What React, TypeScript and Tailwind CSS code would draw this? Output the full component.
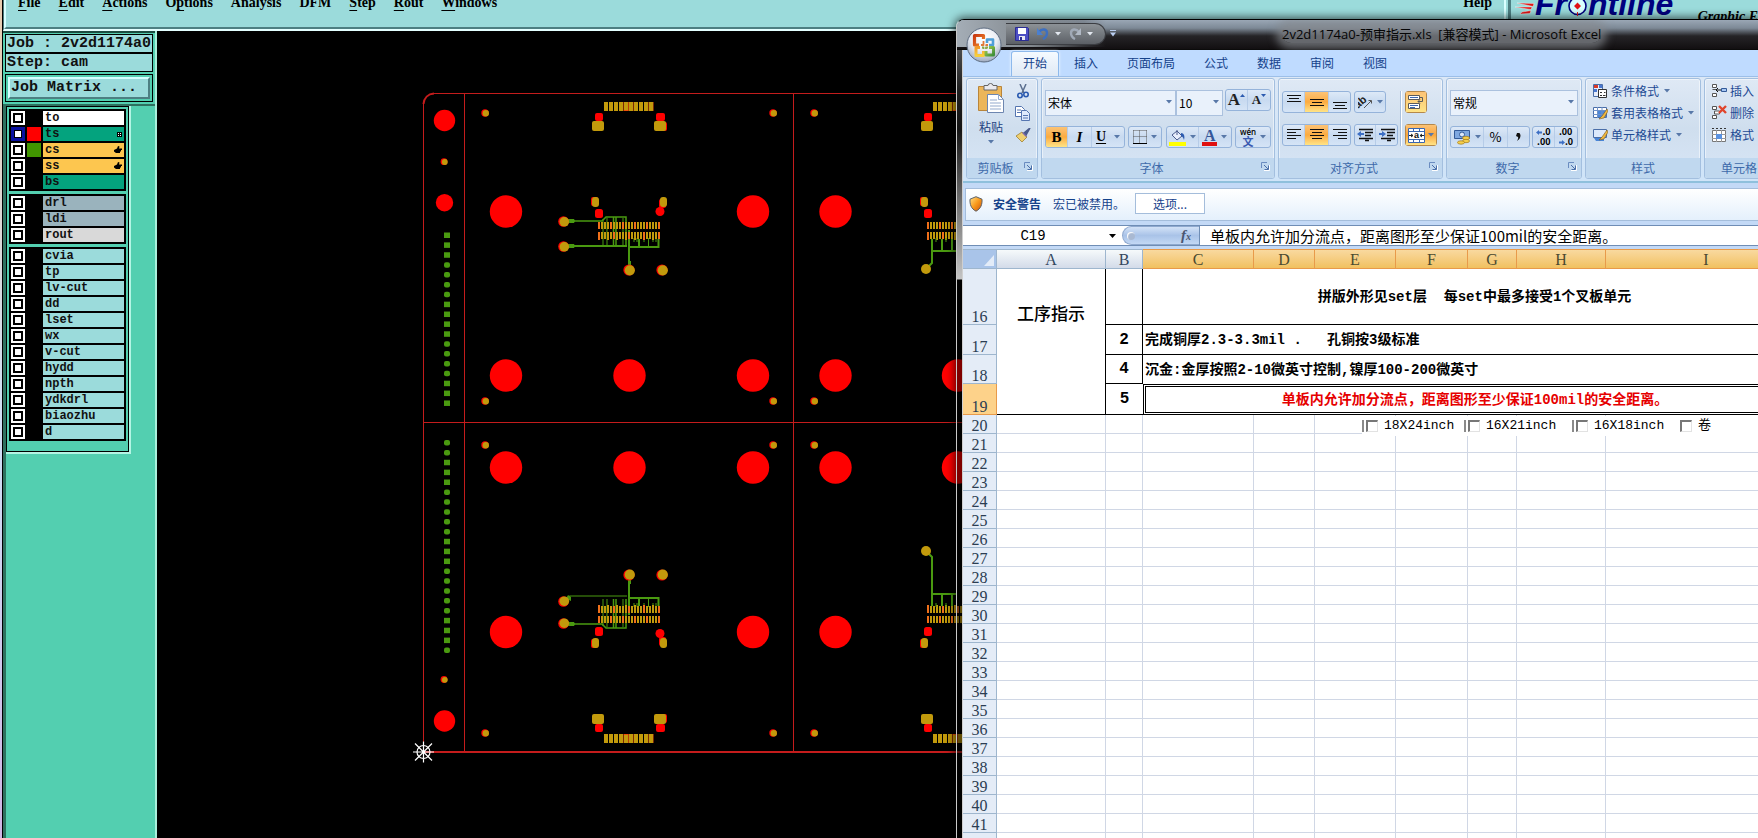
import React from "react";

type Layer = { name: string; bg: string; swatch?: string; mark?: "hand" | "grid"; active?: boolean };

const layerGroups: Layer[][] = [
  [
    { name: "to", bg: "bg-white" },
    { name: "ts", bg: "bg-[#04a37e]", swatch: "bg-[#ff0000]", mark: "grid", active: true },
    { name: "cs", bg: "bg-[#fdc64f]", swatch: "bg-[#419600]", mark: "hand" },
    { name: "ss", bg: "bg-[#fdc64f]", mark: "hand" },
    { name: "bs", bg: "bg-[#04a37e]" },
  ],
  [
    { name: "drl", bg: "bg-[#9ab3bd]" },
    { name: "ldi", bg: "bg-[#9ab3bd]" },
    { name: "rout", bg: "bg-[#d9d9d9]" },
  ],
  ["cvia", "tp", "lv-cut", "dd", "lset", "wx", "v-cut", "hydd", "npth", "ydkdrl", "biaozhu", "d"].map((name) => ({
    name,
    bg: "bg-[#9bdbdb]",
  })),
];

const menus: [string, string, string][] = [
  ["", "F", "ile"],
  ["", "E", "dit"],
  ["", "A", "ctions"],
  ["O", "p", "tions"],
  ["Analysis", "", ""],
  ["DFM", "", ""],
  ["", "S", "tep"],
  ["", "R", "out"],
  ["", "W", "indows"],
];

/* ---------- CAM application ---------- */

function MenuBar() {
  return (
    <header className="flex h-[31px] shrink-0 overflow-hidden border-b-2 border-l border-[#e4ffff] border-l-[#4a7c7c] bg-[#9bdbdb]">
      <div className="flex min-w-0 flex-1 items-start justify-between border-b-2 border-l-2 border-b-[#4d7f82] border-l-[#d9ffff] pl-3 pr-3">
        <nav className="-mt-[5px] flex gap-[18px] font-['Liberation_Serif',serif] text-sm leading-4 font-bold text-black">
          {menus.map(([a, u, b]) => (
            <button key={a + u + b} type="button" className="whitespace-nowrap">
              {a}
              {u && <span className="underline decoration-1 underline-offset-[3px]">{u}</span>}
              {b}
            </button>
          ))}
        </nav>
        <button type="button" className="-mt-[5px] font-['Liberation_Serif',serif] text-sm leading-4 font-bold">
          Help
        </button>
      </div>
      <div className="flex w-[254px] shrink-0 items-start border-l-2 border-[#d9ffff] pl-0.5">
        <div className="flex h-full w-full items-start border-l-[3px] border-[#4d7f82] pl-1">
          <svg width="20" height="16" viewBox="0 0 20 16" className="shrink-0">
            <path d="M2 3L19 3.500L18 6.500zM0 7L17 7L16 9.500zM7 12L16 10.500L15 13.500L5 14z" fill="#e01414" stroke="#fff" strokeWidth=".4" />
          </svg>
          <div className="-mt-3 flex items-start font-['Liberation_Sans',sans-serif] text-[32px] leading-8 font-bold text-[#00007f] italic">
            <span>Fr</span>
            <svg width="21" height="20" viewBox="0 0 21 20" className="mt-2 shrink-0">
              <circle cx="10.500" cy="10" r="8.500" fill="#d8ffff" stroke="#00007f" strokeWidth="1.600" />
              <path d="M10.500 6.500l3.500 3.500-3.500 3.500-3.500-3.500zM10 0h1v4h-1zM10 16h1v4h-1z" fill="#e01414" />
            </svg>
            <span>ntline</span>
          </div>
          <span className="mt-[9px] ml-auto font-['Liberation_Serif',serif] text-sm leading-4 font-bold whitespace-nowrap italic">
            Graphic E
          </span>
        </div>
      </div>
    </header>
  );
}

function HandIcon() {
  return (
    <svg width="8" height="8" viewBox="0 0 8 8" fill="#000">
      <path d="M0 4L3 2.500L4 0L5.500 .5L5 2.500H8V4H7V5H6.500V6H6V7H2L0 5.500z" />
    </svg>
  );
}

function GridIcon() {
  return (
    <svg width="5" height="5" viewBox="0 0 5 5">
      <path d="M0 0h5v5H0z" fill="#000" />
      <path d="M1 1h1v1H1zM3 1h1v1H3zM1 3h1v1H1zM3 3h1v1H3z" fill="#fff" />
    </svg>
  );
}

function Sidebar() {
  return (
    <aside className="flex w-[154px] shrink-0 flex-col border-r-2 border-[#a8f0dc] bg-[#53cfb0] font-['Liberation_Mono',monospace] font-bold text-[#111]">
      <div className="flex flex-col border-t-2 border-[#1c4c41] p-0.5 pt-px text-[15px] leading-[17px]">
        <div className="border border-black bg-[#9bdbdb] px-px whitespace-nowrap">Job : 2v2d1174a0</div>
        <div className="border border-black bg-[#9bdbdb] px-px">Step: cam</div>
        <div className="mt-0.5 border border-black p-0.5">
          <button
            type="button"
            className="block w-full border-2 border-t-[#d5ffff] border-r-[#4d7f82] border-b-[#4d7f82] border-l-[#d5ffff] bg-[#9bdbdb] px-px text-left leading-[18px]"
          >
            Job Matrix ...
          </button>
        </div>
      </div>
      <div className="flex flex-1 border-t-2 border-l-[3px] border-[#2e705f]">
        <div className="w-[125px] self-start border-r-2 border-b-2 border-[#b4f5e4]">
          <div className="flex flex-col gap-[3px] border border-black p-0.5 pb-2.5">
            {layerGroups.map((group, i) => (
              <ul key={i} className="flex flex-col gap-0.5 bg-black p-0.5 text-xs leading-[14px]">
                {group.map((l) => (
                  <li key={l.name} className="flex h-3.5 gap-0.5">
                    <button
                      type="button"
                      aria-label={`Toggle ${l.name}`}
                      className={
                        l.active
                          ? "size-3.5 border-[3px] border-[#0a12a0] bg-black p-px"
                          : "size-3.5 border-2 border-white bg-black p-0.5"
                      }
                    >
                      <span className="block size-full bg-white" />
                    </button>
                    <span className={`size-3.5 ${l.swatch ?? "bg-black"}`} />
                    <span className={`flex flex-1 items-center justify-between px-0.5 ${l.bg}`}>
                      {l.name}
                      {l.mark === "hand" && <HandIcon />}
                      {l.mark === "grid" && <GridIcon />}
                    </span>
                  </li>
                ))}
              </ul>
            ))}
          </div>
        </div>
      </div>
    </aside>
  );
}

const GOLD = "#c29a0c";
const RED = "#ff0000";
const GREEN = "#4a9a10";
const LINE = "#c41c1c";

function range(n: number) {
  return Array.from({ length: n }, (_, i) => i);
}

function Pad({ x, y, r }: { x: number; y: number; r: number }) {
  return (
    <g>
      <circle cx={x - 0.5} cy={y} r={r} fill={RED} />
      <circle cx={x + 0.3} cy={y + 0.3} r={r - 0.5} fill={GOLD} />
    </g>
  );
}

function Connector() {
  return (
    <g>
      {range(10).map((i) => (
        <g key={i}>
          {(i === 4 || i === 5 || i === 9) && <rect x={603.500 + i * 5} y={102} width={5} height={9} fill="#f0500a" />}
          <rect x={604 + i * 5} y={102} width={4} height={i === 4 ? 8 : 9} fill={GOLD} />
        </g>
      ))}
      <rect x={595} y={113} width={8} height={8} rx={2} fill={RED} />
      <rect x={656} y={113} width={9} height={8} rx={2} fill={RED} />
      <rect x={656} y={122} width={11} height={9} rx={2} fill={RED} />
      <rect x={592} y={121} width={12} height={10} rx={2} fill={GOLD} />
      <rect x={654} y={121} width={12} height={10} rx={2} fill={GOLD} />
      <rect x={591} y={197} width={7} height={9} rx={2} fill={RED} />
      <rect x={592} y={197} width={7} height={10} rx={3} fill={GOLD} />
      <rect x={659} y={199} width={7} height={9} rx={2} fill={RED} />
      <rect x={660} y={197} width={7} height={10} rx={3} fill={GOLD} />
      <rect x={595} y={209} width={8} height={9} rx={2.500} fill={RED} />
      <circle cx={660} cy={211.500} r={4.500} fill={RED} />
      {range(21).map((i) => (
        <g key={i}>
          <rect x={598 + i * 3} y={222} width={2} height={7} fill={i % 4 === 0 ? "#f0701a" : GOLD} />
          <rect x={598 + i * 3} y={232} width={2} height={i % 3 === 0 ? 8 : 7} fill={i % 5 === 0 ? "#f0701a" : GOLD} />
        </g>
      ))}
    </g>
  );
}

function LeftTraces({ mirrored = false }: { mirrored?: boolean }) {
  const padY = mirrored ? 243.500 : 246.500;
  return (
    <g>
      <g stroke={GREEN} fill="none" strokeWidth={1.500}>
        <path d="M568 221H602L606 217H626V246" />
        <path d={mirrored ? "M566 247L570 249H627" : "M568 246H627"} strokeWidth={mirrored ? 1.200 : 2} />
        <path d="M603 219V246M607 218V246M623 218V246" strokeWidth={1} />
        <path d="M613.500 217V246M616 217V246" strokeWidth={1.500} />
        <path d="M629 230V265M629 247H658.500V239" strokeWidth={2} />
        <path d="M639 239V247" strokeWidth={2} />
        <path d="M634 238V242M637 238V242M644 238V242M648.500 238V246M653 238V242M656 238V242" strokeWidth={1} />
      </g>
      <path d="M568 219h6l1 2-1 2h-6zM628 266l1-5h2v5z" fill={GREEN} />
      <path d={mirrored ? "M566 246l5-2 0 4-3 2z" : "M568 244h6l1 2-1 2h-6z"} fill={GREEN} />
      <Pad x={564} y={221.500} r={5.300} />
      <Pad x={564} y={padY} r={5.300} />
      <Pad x={629.500} y={270} r={5.600} />
      <Pad x={662.500} y={270} r={5.600} />
    </g>
  );
}

function RightTraces({ reach }: { reach: number }) {
  return (
    <g>
      <g stroke={GREEN} fill="none" strokeWidth={2}>
        <path d={`M932 239V${reach - 6}L927 ${reach - 1}M932 251H956M942 239V251M952 239V251`} />
        <path d="M936 238V242M946 238V242" strokeWidth={1} />
      </g>
      <circle cx={926} cy={reach} r={5} fill={GOLD} />
    </g>
  );
}

function BoardCanvas() {
  const big: [number, number][] = [
    [506, 211.500], [753, 211.500], [835.500, 211.500],
    [506, 375.500], [629.500, 375.500], [753, 375.500], [835.500, 375.500], [958, 375.500],
    [506, 467.500], [629.500, 467.500], [753, 467.500], [835.500, 467.500], [958, 467.500],
    [506, 632], [753, 632], [835.500, 632],
  ];
  return (
    <svg width="806" height="807" viewBox="157 31 806 807" className="shrink-0" aria-label="Panel view">
      <g stroke={LINE} fill="none">
        <path d="M423.500 751V104M434 93.500H963M464.500 93.500V751M793.500 93.500V751M423.500 422.500H963" />
        <path d="M423.500 752H963" strokeWidth={2} />
        <path d="M423.500 104C424 98 428 94 434 93.500" strokeWidth={2} />
      </g>
      {big.map(([x, y]) => (
        <circle key={`${x}-${y}`} cx={x} cy={y} r={16.200} fill={RED} />
      ))}
      <circle cx={444.500} cy={120.500} r={10.700} fill={RED} />
      <circle cx={444.500} cy={202.700} r={8.700} fill={RED} />
      <circle cx={444.500} cy={721} r={10.700} fill={RED} />
      <Pad x={444.500} y={161.700} r={3.400} />
      <Pad x={444.500} y={679.500} r={3.400} />
      {[485.500, 773.500, 814.500].map((x) =>
        [113, 401, 445, 733].map((y) => <Pad key={`${x}-${y}`} x={x} y={y} r={3.700} />)
      )}
      {range(18).map((i) => (
        <rect key={i} x={444} y={232.500 + i * 9.880} width={6} height={5.500} rx={i % 8 < 3 || i % 8 === 7 ? 0 : 2} fill={GREEN} />
      ))}
      {range(22).map((i) => (
        <rect key={i} x={444} y={440 + i * 9.880} width={6} height={5.500} rx={i % 8 > 1 && i % 8 < 5 ? 0 : 2} fill={GREEN} />
      ))}
      <LeftTraces />
      <Connector />
      <g transform="translate(329 0)">
        <Connector />
      </g>
      <RightTraces reach={269} />
      <g transform="translate(0 845) scale(1 -1)">
        <LeftTraces mirrored />
        <Connector />
        <g transform="translate(329 0)">
          <Connector />
        </g>
        <RightTraces reach={294} />
      </g>
      <g stroke="#fff" strokeWidth={1.200} fill="none">
        <circle cx={423.500} cy={752} r={6.500} />
        <path d="M413 752H434M423.500 741.500V762.500M415 743.500L432 760.500M415 760.500L432 743.500" />
      </g>
    </svg>
  );
}

/* ---------- Spreadsheet window ---------- */

function Caret({ light = false }: { light?: boolean }) {
  return (
    <svg width="6" height="4" viewBox="0 0 6 4" className="shrink-0">
      <path d="M0 0h6L3 3.500z" fill={light ? "#e3e8f0" : "#5878a8"} />
    </svg>
  );
}

function OfficeButton() {
  return (
    <button type="button" aria-label="Office" className="absolute top-2 left-[10px] z-10">
      <svg width="36" height="36" viewBox="0 0 36 36">
        <defs>
          <radialGradient id="orb" cx=".5" cy=".3" r=".7">
            <stop offset="0" stopColor="#fff" />
            <stop offset=".55" stopColor="#eaedf4" />
            <stop offset="1" stopColor="#9fabc0" />
          </radialGradient>
          <linearGradient id="warm" x1="0" y1="0" x2="0" y2="1">
            <stop offset="0" stopColor="#f29a2a" />
            <stop offset="1" stopColor="#f8cf3c" />
          </linearGradient>
          <linearGradient id="hot" x1="0" y1="0" x2="1" y2="1">
            <stop offset="0" stopColor="#c93a12" />
            <stop offset="1" stopColor="#f08a2c" />
          </linearGradient>
          <linearGradient id="leaf" x1="0" y1="0" x2="1" y2="1">
            <stop offset="0" stopColor="#a6cc4a" />
            <stop offset="1" stopColor="#3e8f3a" />
          </linearGradient>
        </defs>
        <circle cx="18" cy="18" r="17" fill="url(#orb)" stroke="#5c6b80" />
        <g fill="none" strokeLinejoin="round">
          <path d="M17.500 12V8.500H8.500v9.500H13" stroke="url(#hot)" strokeWidth="3.200" />
          <path d="M21 16v-3.500h6V18h-4" stroke="#4f9fd8" strokeWidth="2.600" />
          <path d="M14 20.500H10v8h7.500V24" stroke="url(#warm)" strokeWidth="3" />
          <path d="M23 20.500h4.500v7.500H20V24" stroke="url(#leaf)" strokeWidth="3" />
          <path d="M17.500 14v4H15M20 17.500V18h2" stroke="#e07a38" strokeWidth="1.800" />
          <path d="M17.500 22v-1.500H16M20 22v-1.500h2" stroke="#8aa84a" strokeWidth="1.800" />
        </g>
      </svg>
    </button>
  );
}

function TitleBar() {
  return (
    <div className="flex h-[30px] shrink-0 items-center border-b border-[#0b0b0b] bg-[linear-gradient(to_bottom,#9aa7b5_0%,#7d8996_28%,#252427_55%,#120f11_100%)] pb-0.5">
      <div className="flex h-full w-[149px] items-center bg-[linear-gradient(to_right,#a4adb6_0%,#83898f_50%,rgba(90,94,100,0.4)_85%,transparent_100%)] pl-[49px]">
        <div className="flex h-[22px] w-[100px] shrink-0 items-center gap-1 rounded-r-full border border-l-0 border-[#3b3d42] bg-linear-to-b from-[#8d9297] to-[#5c6066] pl-[9px]">
          <button type="button" aria-label="保存">
            <svg width="14" height="14" viewBox="0 0 14 14">
              <path d="M.5 .5h12l1 1v12H.5z" fill="#4d4fc4" stroke="#2b2d92" />
              <path d="M3 1h8v6H3z" fill="#fff" />
              <path d="M4 9h6v4H4z" fill="#e8e8f2" />
              <path d="M5 10h2v3H5z" fill="#2b2d92" />
            </svg>
          </button>
          <button type="button" aria-label="撤消" className="flex items-center gap-1.5 pl-1">
            <svg width="12" height="13" viewBox="0 0 12 13" fill="none">
              <path d="M2 5C5 1 10 2 10 6c0 3-2 5-4 6" stroke="#3d6fc0" strokeWidth="2.400" />
              <path d="M0 1v7h6z" fill="#4a7fd0" />
            </svg>
            <Caret light />
          </button>
          <button type="button" aria-label="恢复" className="flex items-center gap-1.5 pl-1">
            <svg width="12" height="13" viewBox="0 0 12 13" fill="none">
              <path d="M10 5C7 1 2 2 2 6c0 3 2 5 4 6" stroke="#a0a9b6" strokeWidth="2.400" />
              <path d="M12 1v7H6z" fill="#b0b8c4" />
            </svg>
            <Caret light />
          </button>
        </div>
      </div>
      <button type="button" aria-label="自定义" className="ml-1">
        <svg width="6" height="7" viewBox="0 0 6 7">
          <path d="M0 0h6v1H0zM0 2.500h6L3 6.500z" fill="#b9cdf0" />
        </svg>
      </button>
      <h1 className="flex-1 pl-[166px] font-['Open_Sans','Noto_Sans_CJK_SC',sans-serif] text-[13px] leading-5 font-normal whitespace-pre text-[#050505]">
        <span className="rounded-full bg-[#85898e]/70 shadow-[0_0_8px_6px_rgba(133,137,142,0.7)]">
          2v2d1174a0-预审指示.xls  [兼容模式] - Microsoft Excel
        </span>
      </h1>
    </div>
  );
}

function Group({ label, width, launcher = true, children }: { label: string; width: string; launcher?: boolean; children: React.ReactNode }) {
  return (
    <section
      className={`flex h-[101px] shrink-0 flex-col overflow-hidden rounded-[3px] border border-[#a3bfdf] bg-linear-to-b from-[#dfe9f5] via-[#cfdeee] to-[#d8e6f6] shadow-[inset_0_0_0_1px_rgba(255,255,255,0.5)] ${width}`}
    >
      <div className="flex-1">{children}</div>
      <footer className="flex h-5 items-center bg-[#c0d8ef] text-xs text-[#3e6aaa]">
        <span className="flex-1 text-center whitespace-nowrap">{label}</span>
        {launcher && (
          <button type="button" aria-label={`${label}设置`} className="mr-1 pb-1">
            <svg width="9" height="9" viewBox="0 0 9 9" fill="none" stroke="#6a8cc0">
              <path d="M.5 6V.5H6" />
              <path d="M3 3l4 4M7.500 3.500v4h-4" stroke="#4a6ea8" />
              <path d="M3 8.500h5.500V3" stroke="#fff" />
            </svg>
          </button>
        )}
      </footer>
    </section>
  );
}

function Tools({ children }: { children: React.ReactNode }) {
  return (
    <div className="flex h-[22px] shrink-0 divide-x divide-[#b6cce8] overflow-hidden rounded-[3px] border border-[#95b3da] bg-linear-to-b from-[#dde9f7] via-[#c8daf0] to-[#d5e4f6]">
      {children}
    </div>
  );
}

function Tool({ label, w, on = false, caret = false, children }: { label: string; w: string; on?: boolean; caret?: boolean; children: React.ReactNode }) {
  return (
    <button
      type="button"
      aria-label={label}
      className={`flex h-full items-center justify-center gap-1 ${w} ${on ? "bg-linear-to-b from-[#fcc375] via-[#fbab3f] to-[#ffe486]" : ""}`}
    >
      {children}
      {caret && <Caret />}
    </button>
  );
}

function Combo({ label, value, width }: { label: string; value: string; width: string }) {
  return (
    <div className={`relative ${width}`}>
      <select
        aria-label={label}
        defaultValue={value}
        className="h-[26px] w-full appearance-none border border-[#abc1de] bg-[#e9f1fb] pl-0.5 text-xs text-black"
      >
        <option>{value}</option>
      </select>
      <span className="pointer-events-none absolute top-[11px] right-1">
        <Caret />
      </span>
    </div>
  );
}

function Lines({ kind }: { kind: "top" | "mid" | "bot" | "left" | "center" | "right" }) {
  const paths = {
    top: "M0 1.500h14M2 4.500h10M0 7.500h14",
    mid: "M0 5.500h14M2 8.500h10M0 11.500h14",
    bot: "M0 8.500h14M2 11.500h10M0 14.500h14",
    left: "M0 2.500h14M0 5.500h9M0 8.500h14M0 11.500h9",
    center: "M0 2.500h14M2 5.500h10M0 8.500h14M2 11.500h10",
    right: "M0 2.500h14M5 5.500h9M0 8.500h14M5 11.500h9",
  };
  return (
    <svg width="14" height="16" viewBox="0 0 14 16" stroke="#111" strokeWidth="1.200">
      <path d={paths[kind]} />
    </svg>
  );
}

function Indent({ out = false }: { out?: boolean }) {
  return (
    <svg width="16" height="14" viewBox="0 0 16 14" fill="none">
      <path d="M2 1.500h14M8 4.500h8M8 7.500h6M2 10.500h14M8 12.500h4" stroke="#111" strokeWidth="1.300" />
      <path d={out ? "M0 6l4-3v2h3v2H4v2z" : "M7 6L3 3v2H0v2h3v2z"} fill="#3d6fc4" />
    </svg>
  );
}

function StyleIcon({ kind }: { kind: "cond" | "table" | "cell" | "insert" | "delete" | "format" }) {
  return (
    <svg width="16" height="16" viewBox="0 0 16 16" fill="none">
      {kind === "cond" && (
        <>
          <path d="M1.500 1.500h9v12h-9z" fill="#e8eefa" stroke="#4a6ea8" />
          <path d="M2 2h4v3H2zM6 6h4v3H6z" fill="#d83a2a" />
          <path d="M2 6h3v3H2zM7 2h3v3H7z" fill="#4a78d0" />
          <path d="M6.500 6.500h8v8h-8z" fill="#fff" stroke="#333" />
          <path d="M8 9.500h2M12 9.500h1.500M8 12.500h2M11 12.500h2.500" stroke="#333" />
        </>
      )}
      {kind === "table" && (
        <>
          <path d="M1.500 2.500h13v10h-13z" fill="#fff" stroke="#4a6ea8" />
          <path d="M5 6h9v6H5z" fill="#4a86d8" />
          <path d="M1 5.500h13M1 9.500h13M5.500 2v11M10 2v11" stroke="#6f92c8" />
          <path d="M15 4l-5 7-3 3 5-1 4-7z" fill="#f0b840" stroke="#7a5a20" strokeWidth=".6" />
        </>
      )}
      {kind === "cell" && (
        <>
          <path d="M1.500 2.500h13v8h-13z" fill="#dce9fb" stroke="#4a6ea8" />
          <path d="M2 11h10v3H4z" fill="#4a86d8" />
          <path d="M15 3l-5 7-3 3 5-1 4-7z" fill="#f0b840" stroke="#7a5a20" strokeWidth=".6" />
        </>
      )}
      {kind === "insert" && (
        <>
          <path d="M1.500 1.500h4v3h-4zM1.500 6.500h4M1.500 10.500h4v3h-4z" fill="#fff" stroke="#555" />
          <path d="M10.500 5.500h5v3h-5z" fill="#a8c8f4" stroke="#335a98" />
          <path d="M5 7h5M5 7l2-2M5 7l2 2" stroke="#111" />
        </>
      )}
      {kind === "delete" && (
        <>
          <path d="M1.500 1.500h4v3h-4zM1.500 10.500h4v3h-4zM3.500 6h5v3h-5z" fill="#fff" stroke="#555" />
          <path d="M8 1l7 7M15 1L8 8" stroke="#e0452c" strokeWidth="2.400" />
        </>
      )}
      {kind === "format" && (
        <>
          <path d="M1.500 3.500h13v11h-13z" fill="#fff" stroke="#777" />
          <path d="M1 7.500h14M1 11.500h14M5.500 3v12M10.500 3v12" stroke="#999" />
          <path d="M5 7h6v5H5z" fill="#5a92e0" />
          <path d="M1 1.500h2M5 1.500h2M9 1.500h2M13 1.500h2" stroke="#333" />
        </>
      )}
    </svg>
  );
}

function Ribbon() {
  return (
    <div className="flex h-[107px] shrink-0 gap-[3px] overflow-hidden border-t border-b-2 border-t-[#9dbfe8] border-b-[#8fc0dc] bg-linear-to-b from-[#dce8f6] to-[#cfe4f8] pt-px pl-[3px]">
      <Group label="剪贴板" width="w-[72px]">
        <div className="flex justify-between pt-1 pr-1.5 pl-2.5">
          <button type="button" className="flex flex-col items-center text-xs text-[#1e3f80]">
            <svg width="28" height="31" viewBox="0 0 28 31" fill="none">
              <path d="M1.500 3.500h23v24h-23z" fill="#ecb65a" stroke="#b9853a" />
              <path d="M7 2.500h4a2.500 2 0 0 1 5 0h4V7H7z" fill="#e9e9ee" stroke="#666" />
              <path d="M10.500 11.500h11l5 5v13h-16z" fill="#fff" stroke="#6d86b0" />
              <path d="M21.500 11.500v5h5M13 17h7M13 20h11M13 23h11M13 26h11" stroke="#93a9cc" />
            </svg>
            <span className="mt-1 mb-1 leading-[18px]">粘贴</span>
            <Caret />
          </button>
          <div className="flex flex-col gap-[7px] pt-px">
            <button type="button" aria-label="剪切">
              <svg width="16" height="15" viewBox="0 0 16 15" fill="none">
                <path d="M5 0l4 9M11 0L7 9" stroke="#5b6f8f" strokeWidth="1.500" />
                <circle cx="5" cy="11.500" r="2.200" stroke="#2c5bb0" strokeWidth="1.600" />
                <circle cx="11" cy="10.500" r="2.200" stroke="#2c5bb0" strokeWidth="1.600" />
              </svg>
            </button>
            <button type="button" aria-label="复制">
              <svg width="16" height="15" viewBox="0 0 16 15" fill="none" stroke="#5575b0">
                <path d="M.5 .5h6l3 3v7h-9z" fill="#fff" />
                <path d="M6.500 4.500h5l3 3v7h-8z" fill="#dfeafc" />
                <path d="M2 4h4M2 6.500h4M8 9.500h5M8 12h5" />
              </svg>
            </button>
            <button type="button" aria-label="格式刷">
              <svg width="16" height="15" viewBox="0 0 16 15">
                <path d="M15 0l-6 5 2 2z" fill="#4a5b8c" stroke="#4a5b8c" strokeWidth="1.500" />
                <path d="M7 4l5 5-5 5L1 8z" fill="#f0d070" stroke="#a08030" strokeWidth=".8" />
                <path d="M8 4l4 4-1 1-4-4z" fill="#7c6aa8" />
              </svg>
            </button>
          </div>
        </div>
      </Group>

      <Group label="字体" width="w-[234px]">
        <div className="flex flex-col gap-2.5 px-[3px] pt-2.5">
          <div className="flex">
            <Combo label="字体" value="宋体" width="w-[131px]" />
            <Combo label="字号" value="10" width="w-[47px]" />
            <div className="ml-auto">
              <Tools>
                <Tool label="增大字号" w="w-[22px]">
                  <span className="font-['Liberation_Serif',serif] text-[17px] leading-4 font-bold text-[#222]">A</span>
                  <svg width="5" height="12" viewBox="0 0 5 12" className="-ml-1"><path d="M0 3h5L2.500 0z" fill="#2c5bb0" /></svg>
                </Tool>
                <Tool label="减小字号" w="w-[22px]">
                  <span className="font-['Liberation_Serif',serif] text-[13px] leading-4 font-bold text-[#222]">A</span>
                  <svg width="5" height="12" viewBox="0 0 5 12" className="-ml-1"><path d="M0 0h5L2.500 3z" fill="#2c5bb0" /></svg>
                </Tool>
              </Tools>
            </div>
          </div>
          <div className="flex justify-between font-['Liberation_Serif',serif]">
            <Tools>
              <Tool label="加粗" w="w-[22px]" on><span className="text-[15px] font-bold">B</span></Tool>
              <Tool label="倾斜" w="w-6"><span className="text-[15px] font-bold italic">I</span></Tool>
              <Tool label="下划线" w="w-8" caret><span className="pr-1 text-sm font-bold underline underline-offset-2">U</span></Tool>
            </Tools>
            <Tools>
              <Tool label="边框" w="w-8" caret>
                <svg width="14" height="14" viewBox="0 0 14 14" fill="none" stroke="#555">
                  <path d="M.5 .5h13M.5 6.500h13M.5 .5v13M6.500 .5v13M13.500 .5v13" strokeDasharray="1 1" />
                  <path d="M0 13.500h14" stroke="#000" />
                </svg>
              </Tool>
            </Tools>
            <Tools>
              <Tool label="填充颜色" w="w-8" caret>
                <svg width="17" height="17" viewBox="0 0 17 17">
                  <path d="M3 6l5-4 5 5-5 4z" fill="#e8eefc" stroke="#4a5b8c" />
                  <path d="M8 1v5" stroke="#4a5b8c" />
                  <path d="M12 4c3 0 4 3 3 7-1-3-2-4-3-4z" fill="#2c5bb0" />
                  <path d="M0 13h17v4H0z" fill="#ffff00" />
                </svg>
              </Tool>
              <Tool label="字体颜色" w="w-8" caret>
                <span className="border-b-4 border-[#e01010] px-0.5 text-base leading-[13px] font-bold text-[#36589a]">A</span>
              </Tool>
            </Tools>
            <Tools>
              <Tool label="拼音" w="w-[34px]" caret>
                <span className="flex flex-col items-center font-['Open_Sans','Noto_Sans_CJK_SC',sans-serif]">
                  <span className="text-[8px] leading-[9px] font-semibold">wén</span>
                  <span className="text-[11px] leading-[11px] font-bold text-[#3a5ab0]">文</span>
                </span>
              </Tool>
            </Tools>
          </div>
        </div>
      </Group>

      <Group label="对齐方式" width="w-[165px]">
        <div className="flex gap-[3px] px-[3px] pt-3">
          <div className="flex flex-col gap-[11px]">
            <Tools>
              <Tool label="顶端对齐" w="w-[22px]"><Lines kind="top" /></Tool>
              <Tool label="垂直居中" w="w-6" on><Lines kind="mid" /></Tool>
              <Tool label="底端对齐" w="w-[21px]"><Lines kind="bot" /></Tool>
            </Tools>
            <Tools>
              <Tool label="左对齐" w="w-[22px]"><Lines kind="left" /></Tool>
              <Tool label="居中" w="w-6" on><Lines kind="center" /></Tool>
              <Tool label="右对齐" w="w-[21px]"><Lines kind="right" /></Tool>
            </Tools>
          </div>
          <div className="flex flex-col items-start gap-[11px]">
            <Tools>
              <Tool label="方向" w="w-[30px]" caret>
                <svg width="15" height="14" viewBox="0 0 15 14" fill="none">
                  <text x="-3" y="9" fontSize="11" fontWeight="700" fontFamily="Liberation Sans" fill="#222" transform="rotate(-40 5 8)">ab</text>
                  <path d="M6 13l7-7M13.500 5.500v3M13.500 5.500h-3" stroke="#555" />
                </svg>
              </Tool>
            </Tools>
            <Tools>
              <Tool label="减少缩进" w="w-[21px]"><Indent out /></Tool>
              <Tool label="增加缩进" w="w-[21px]"><Indent /></Tool>
            </Tools>
          </div>
          <div className="flex flex-col items-start gap-[11px] border-l border-white pl-[3px] shadow-[-1px_0_0_#a9c0dc]">
            <div className="rounded-[3px] border border-[#b5884a]">
              <button type="button" aria-label="自动换行" className="flex size-5 items-center justify-center bg-linear-to-b from-[#fcc375] to-[#ffe486]">
                <svg width="16" height="16" viewBox="0 0 16 16" fill="none" stroke="#5a5a5a">
                  <path d="M.5 1.500h11v4H.5zM.5 9.500h11v5H.5z" fill="#fff" />
                  <path d="M2 3.500h8M2 11.500h8M2 13.500h5" stroke="#3a66b0" />
                  <path d="M12 3.500h2.500v4H10M12 5.500l-2 2 2 2" />
                </svg>
              </button>
            </div>
            <div className="rounded-[3px] border border-[#b5884a]">
              <button type="button" aria-label="合并后居中" className="flex h-5 w-[30px] items-center justify-between bg-linear-to-b from-[#fcc375] via-[#fba63a] to-[#ffe486] px-0.5">
                <svg width="17" height="15" viewBox="0 0 17 15" fill="none" stroke="#3a66b0">
                  <path d="M.5 .5h16v14H.5z" fill="#fff" />
                  <path d="M0 3.500h17M0 11.500h17M5.500 0v4M11.500 0v4M5.500 11v4M11.500 11v4" />
                  <path d="M1 7.500h4M3 6L5 7.500 3 9M16 7.500h-4M14 6l-2 1.500L14 9" stroke="#222" />
                  <text x="6" y="10" fontSize="9" fontWeight="700" fontFamily="Liberation Sans" fill="#111" stroke="none">a</text>
                </svg>
                <Caret />
              </button>
            </div>
          </div>
        </div>
      </Group>

      <Group label="数字" width="w-[136px]">
        <div className="flex flex-col gap-2.5 px-[3px] pt-2.5">
          <Combo label="数字格式" value="常规" width="w-full" />
          <div className="flex justify-between">
            <Tools>
              <Tool label="会计数字格式" w="w-[33px]" caret>
                <svg width="17" height="16" viewBox="0 0 17 16">
                  <path d="M.5 1.500h15v8H.5z" fill="#7fa8e0" stroke="#335a98" />
                  <circle cx="8" cy="5.500" r="2.500" fill="#dbe8fa" stroke="#335a98" />
                  <ellipse cx="12" cy="9" rx="3.500" ry="1.700" fill="#f6cf4c" stroke="#a07818" strokeWidth=".7" />
                  <ellipse cx="12" cy="12" rx="3.500" ry="1.700" fill="#f6cf4c" stroke="#a07818" strokeWidth=".7" />
                  <ellipse cx="7" cy="13.500" rx="3.500" ry="1.700" fill="#f6cf4c" stroke="#a07818" strokeWidth=".7" />
                </svg>
              </Tool>
              <Tool label="百分比" w="w-6"><span className="text-[13px]">%</span></Tool>
              <Tool label="千位分隔" w="w-[21px]">
                <svg width="5" height="8" viewBox="0 0 5 8"><path d="M1 0h2.500l1 2c0 3-1 4-3.500 6 1-2 1.500-3 1-4L0 3z" fill="#111" /></svg>
              </Tool>
            </Tools>
            <Tools>
              {["增加小数位数", "减少小数位数"].map((label, i) => (
                <Tool key={label} label={label} w="w-[22px]">
                  <span className={`flex flex-col text-[9px] leading-[10px] font-bold ${i ? "items-start" : "items-end"}`}>
                    <span className="flex items-center">
                      {!i && <svg width="6" height="5" viewBox="0 0 6 5"><path d="M0 2.500L3 0v1.500h3v2H3V5z" fill="#3d6fc4" /></svg>}
                      {i ? ".00" : ".0"}
                    </span>
                    <span className="flex items-center">
                      {!!i && <svg width="6" height="5" viewBox="0 0 6 5"><path d="M6 2.500L3 0v1.500H0v2h3V5z" fill="#3d6fc4" /></svg>}
                      {i ? ".0" : ".00"}
                    </span>
                  </span>
                </Tool>
              ))}
            </Tools>
          </div>
        </div>
      </Group>

      <Group label="样式" width="w-[116px]" launcher={false}>
        <div className="flex flex-col items-start pt-px pl-1.5 text-xs text-[#1e4a94]">
          {([["条件格式", "cond"], ["套用表格格式", "table"], ["单元格样式", "cell"]] as const).map(([t, k]) => (
            <button key={t} type="button" className="flex h-[22px] items-center gap-[3px] whitespace-nowrap">
              <StyleIcon kind={k} />
              {t}
              <span className="pl-0.5"><Caret /></span>
            </button>
          ))}
        </div>
      </Group>

      <Group label="单元格" width="w-[70px]" launcher={false}>
        <div className="flex flex-col items-start pt-px pl-1.5 text-xs text-[#1e4a94]">
          {([["插入", "insert"], ["删除", "delete"], ["格式", "format"]] as const).map(([t, k]) => (
            <button key={t} type="button" className="flex h-[22px] items-center gap-[3px] whitespace-nowrap">
              <StyleIcon kind={k} />
              {t}
            </button>
          ))}
        </div>
      </Group>
    </div>
  );
}

function MessageBar() {
  return (
    <div className="mt-[5px] ml-0.5 flex h-[33px] shrink-0 items-center border border-r-0 border-[#a4bddb] bg-linear-to-b from-white to-[#e4f0fc] pb-0.5 pl-[3px] text-xs text-[#15428b]">
      <svg width="14" height="16" viewBox="0 0 14 16">
        <defs>
          <linearGradient id="shield" x1="0" y1="0" x2="1" y2="1">
            <stop offset="0" stopColor="#ffe28a" />
            <stop offset=".5" stopColor="#f99a1c" />
            <stop offset="1" stopColor="#c8500a" />
          </linearGradient>
        </defs>
        <path d="M7 .7l6 2.500c.3 5-1 9.500-6 12C2 12.700.7 8.200 1 3.200z" fill="url(#shield)" stroke="#5b6068" />
      </svg>
      <strong className="ml-2.5 font-bold">安全警告</strong>
      <span className="ml-3">宏已被禁用。</span>
      <button type="button" className="ml-2.5 flex h-[21px] w-[70px] items-center justify-center border border-[#a4bddb] bg-white">
        选项...
      </button>
    </div>
  );
}

function FormulaBar() {
  return (
    <div className="my-[3px] mt-1 flex h-[21px] shrink-0 items-stretch border-y border-[#6f8db5] bg-white">
      <label className="flex w-[157px] items-center">
        <input
          aria-label="名称框"
          defaultValue="C19"
          className="w-36 bg-transparent pr-1 text-center font-['Liberation_Mono',monospace] text-sm text-black outline-none"
        />
        <svg width="7" height="4" viewBox="0 0 7 4" className="ml-0.5"><path d="M0 0h7L3.500 4z" /></svg>
      </label>
      <div className="ml-0.5 flex w-[77px] items-center justify-between rounded-l-full border border-r-0 border-[#8fa9cf] bg-linear-to-b from-[#d3e2f7] via-[#a9c3e8] to-[#c3d8f5] px-1 shadow-[1px_0_0_#6f8db5]">
        <span className="size-2 rounded-full bg-[#a9b9d2] shadow-[inset_1px_1px_1px_#fff]" />
        <span className="pr-1 font-['Liberation_Serif',serif] text-[15px] leading-4 font-bold text-[#4a5670] italic">
          f<span className="text-[10px]">x</span>
        </span>
      </div>
      <input
        aria-label="编辑栏"
        defaultValue="单板内允许加分流点，距离图形至少保证100mil的安全距离。"
        className="ml-[11px] min-w-0 flex-1 bg-transparent text-[15px] leading-[19px] text-black outline-none"
      />
    </div>
  );
}

const cols: { id: string; w: string }[] = [
  { id: "A", w: "w-[109px]" },
  { id: "B", w: "w-[37px]" },
  { id: "C", w: "w-[111px]" },
  { id: "D", w: "w-[61px]" },
  { id: "E", w: "w-[81px]" },
  { id: "F", w: "w-[72px]" },
  { id: "G", w: "w-[49px]" },
  { id: "H", w: "w-[89px]" },
  { id: "I", w: "w-[201px]" },
];

const boxed = "border-r border-b border-black";

function RowHead({ n, on = false }: { n: number; on?: boolean }) {
  return (
    <th
      scope="row"
      className={`border-r border-b p-0 text-center align-bottom font-['Liberation_Serif',serif] text-base leading-[15px] font-normal text-[#2b3d52] ${
        on ? "border-[#e89a4a] bg-[#fdd28a]" : "border-[#9eb6ce] bg-[#e4ecf7]"
      }`}
    >
      {n}
    </th>
  );
}

function Sheet() {
  return (
    <div className="relative min-h-0 flex-1 overflow-hidden bg-white">
      <table className="w-[844px] table-fixed border-separate border-spacing-0 font-['Liberation_Mono','Noto_Sans_CJK_SC',monospace]">
        <thead>
          <tr className="h-5">
            <th className="w-[34px] border-t border-r border-b border-[#9eb6ce] bg-[#a9c4e9] p-0">
              <svg width="10" height="11" viewBox="0 0 10 11" className="mt-0.5 mr-0.5 ml-auto block"><path d="M10 0v11H0z" fill="#e3ecf8" /></svg>
            </th>
            {cols.map((c, i) => (
              <th
                key={c.id}
                scope="col"
                className={`border-t border-r border-b p-0 pt-0.5 text-center font-['Liberation_Serif',serif] text-base leading-4 font-normal ${c.w} ${
                  i > 1
                    ? "border-[#e89a4a] bg-linear-to-b from-[#f9d99f] to-[#f1c15f] text-[#4a4a30]"
                    : "border-[#9eb6ce] bg-linear-to-b from-[#f6fafb] to-[#d3dbe9] text-[#33475e]"
                }`}
              >
                {c.id}
              </th>
            ))}
          </tr>
        </thead>
        <tbody className="text-sm leading-4 text-black">
          <tr className="h-14">
            <RowHead n={16} />
            <td rowSpan={4} className={`p-0 pt-[35px] text-center align-top text-[17px] leading-6 font-medium ${boxed}`}>
              工序指示
            </td>
            <td className={`p-0 ${boxed}`} />
            <td colSpan={7} className={`p-0 text-center font-bold whitespace-pre ${boxed}`}>
              拼版外形见set层  每set中最多接受1个叉板单元
            </td>
          </tr>
          <tr className="h-[30px]">
            <RowHead n={17} />
            <td className={`p-0 text-center text-base font-bold ${boxed}`}>2</td>
            <td colSpan={7} className={`p-0 pl-0.5 font-bold whitespace-pre ${boxed}`}>
              完成铜厚2.3-3.3mil .   孔铜按3级标准
            </td>
          </tr>
          <tr className="h-[29px]">
            <RowHead n={18} />
            <td className={`p-0 text-center text-base font-bold ${boxed}`}>4</td>
            <td colSpan={7} className="border-r border-black p-0 pl-0.5 font-bold">
              沉金:金厚按照2-10微英寸控制,镍厚100-200微英寸
            </td>
          </tr>
          <tr className="h-[31px]">
            <RowHead n={19} on />
            <td className="border-b border-black p-0 text-center text-base font-bold">5</td>
            <td colSpan={7} className="border-[3px] border-double border-black p-0 text-center font-bold text-[#e60000]">
              单板内允许加分流点，距离图形至少保证100mil的安全距离。
            </td>
          </tr>
          {range(23).map((i) => (
            <tr key={i} className="h-[19px]">
              <RowHead n={20 + i} />
              {cols.map((c) => (
                <td key={c.id} className="border-r border-b border-[#d0d7e5] p-0" />
              ))}
            </tr>
          ))}
        </tbody>
      </table>
      <div className="absolute top-[167px] right-0 left-[399px] flex h-5 items-start bg-white font-['Liberation_Mono','Noto_Sans_CJK_SC',monospace] text-[13px] text-black">
        {[["18X24inch", "w-[102px]"], ["16X21inch", "w-[108px]"], ["16X18inch", "w-[104px]"], ["卷", "w-12"]].map(([t, w], i) => (
          <label key={t} className={`flex h-5 shrink-0 items-center gap-1.5 ${w}`}>
            <span className={`-mr-1 h-3 w-0.5 ${i < 3 ? "bg-[#8a8a8a]" : "bg-white"}`} />
            <input
              type="checkbox"
              className="size-3 shrink-0 appearance-none border border-t-2 border-l-2 border-[#e2e2e2] border-t-[#777] border-l-[#777] bg-white"
            />
            {t}
          </label>
        ))}
      </div>
    </div>
  );
}

function ExcelWindow() {
  const tabs = ["开始", "插入", "页面布局", "公式", "数据", "审阅", "视图"];
  return (
    <div className="absolute top-[19px] right-0 bottom-0 left-[956px] flex flex-col rounded-tl-lg shadow-[0_0_8px_2px_rgba(0,0,0,0.6)]">
      <div className="flex min-h-0 flex-1 flex-col overflow-hidden rounded-tl-lg border-t border-l border-t-black border-l-[#c9c9c9] font-['Noto_Sans_CJK_SC',sans-serif]">
        <TitleBar />
        <div className="flex min-h-0 flex-1">
          <div className="w-1.5 shrink-0 border-r border-[#cfcfcf] bg-[linear-gradient(to_bottom,#4a4c4e_0px,#202020_40px,#141414_80px,#6e6e6e_150px,#c4c4c4_229px,rgba(0,0,0,0.5)_230px)]" />
          <div className="flex min-w-0 flex-1 flex-col bg-[#c3d9f6]">
            <nav className="flex h-[26px] shrink-0 gap-px bg-[#bfdbff] pt-px pl-12 text-xs text-[#15428b]">
              {tabs.map((t, i) => (
                <button
                  key={t}
                  type="button"
                  className={
                    i === 0
                      ? "rounded-t-[3px] border border-b-0 border-[#8db9ec] bg-linear-to-b from-[#f5faff] to-[#dfe9f5] px-[11px] pb-0.5 shadow-[0_0_3px_#fff]"
                      : "px-3.5 pb-px"
                  }
                >
                  {t}
                </button>
              ))}
            </nav>
            <Ribbon />
            <MessageBar />
            <FormulaBar />
            <Sheet />
          </div>
        </div>
      </div>
      <OfficeButton />
    </div>
  );
}

export default function App() {
  return (
    <div className="relative flex h-screen overflow-hidden bg-black">
      <div className="w-0.5 shrink-0 bg-linear-to-b from-[#e8cdb0] via-[#cfe0f5] to-[#d0b4e4]" />
      <div className="flex min-w-0 flex-1 flex-col border-l border-black">
        <MenuBar />
        <div className="flex min-h-0 flex-1">
          <Sidebar />
          <main className="flex min-w-0 flex-1 overflow-hidden bg-black">
            <BoardCanvas />
          </main>
        </div>
      </div>
      <ExcelWindow />
    </div>
  );
}
